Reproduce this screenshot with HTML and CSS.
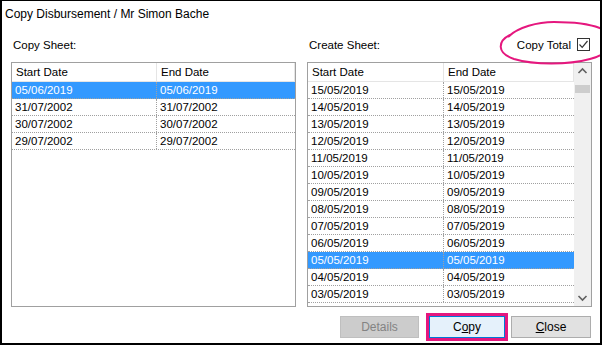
FILE: index.html
```html
<!DOCTYPE html>
<html lang="en">
<head>
  <meta charset="UTF-8" />
  <title>Copy Disbursement</title>
  <link rel="stylesheet" href="styles.css">
</head>
<body>

  <div class="window">
    <div class="title">Copy Disbursement / Mr Simon Bache</div>

    <div class="panes">
      <!-- Copy sheet (left) -->
      <div class="pane">
        <div class="pane-head">Copy Sheet:</div>
        <div class="list">
          <div class="grid left">
            <div class="row head"><div class="cell">Start Date</div><div class="cell">End Date</div></div>
            <div class="row sel"><div class="cell">05/06/2019</div><div class="cell">05/06/2019</div></div>
            <div class="row"><div class="cell">31/07/2002</div><div class="cell">31/07/2002</div></div>
            <div class="row"><div class="cell">30/07/2002</div><div class="cell">30/07/2002</div></div>
            <div class="row"><div class="cell">29/07/2002</div><div class="cell">29/07/2002</div></div>
          </div>
        </div>
      </div>

      <!-- Create sheet (right) -->
      <div class="pane">
        <div class="pane-head">
          <span>Create Sheet:</span>
          <span class="spacer"></span>
          <span class="copy-total">Copy Total</span>
          <span class="checkbox">
            <svg width="11" height="11" viewBox="0 0 11 11"><path d="M1.5 5.5 L4.2 8.3 L9.5 2" fill="none" stroke="#333" stroke-width="1.2"/></svg>
          </span>
        </div>
        <div class="list">
          <div class="grid right">
            <div class="row head"><div class="cell">Start Date</div><div class="cell">End Date</div></div>
            <div class="row"><div class="cell">15/05/2019</div><div class="cell">15/05/2019</div></div>
            <div class="row"><div class="cell">14/05/2019</div><div class="cell">14/05/2019</div></div>
            <div class="row"><div class="cell">13/05/2019</div><div class="cell">13/05/2019</div></div>
            <div class="row"><div class="cell">12/05/2019</div><div class="cell">12/05/2019</div></div>
            <div class="row"><div class="cell">11/05/2019</div><div class="cell">11/05/2019</div></div>
            <div class="row"><div class="cell">10/05/2019</div><div class="cell">10/05/2019</div></div>
            <div class="row"><div class="cell">09/05/2019</div><div class="cell">09/05/2019</div></div>
            <div class="row"><div class="cell">08/05/2019</div><div class="cell">08/05/2019</div></div>
            <div class="row"><div class="cell">07/05/2019</div><div class="cell">07/05/2019</div></div>
            <div class="row"><div class="cell">06/05/2019</div><div class="cell">06/05/2019</div></div>
            <div class="row sel"><div class="cell">05/05/2019</div><div class="cell">05/05/2019</div></div>
            <div class="row"><div class="cell">04/05/2019</div><div class="cell">04/05/2019</div></div>
            <div class="row"><div class="cell">03/05/2019</div><div class="cell">03/05/2019</div></div>
          </div>
          <div class="scrollbar">
            <svg class="arrow" width="17" height="17" viewBox="0 0 17 17"><path d="M4.5 10 L8.5 6 L12.5 10" fill="none" stroke="#606060" stroke-width="1.6"/></svg>
            <div class="thumb"></div>
            <div class="spacer"></div>
            <svg class="arrow" width="17" height="17" viewBox="0 0 17 17"><path d="M4.5 7 L8.5 11 L12.5 7" fill="none" stroke="#606060" stroke-width="1.6"/></svg>
          </div>
        </div>
      </div>
    </div>

    <div class="buttons">
      <div class="btn disabled">Details</div>
      <div class="btn focus">C<u>o</u>py</div>
      <div class="btn"><u>C</u>lose</div>
    </div>

    <!-- hand drawn highlight round "Copy Total" -->
    <svg class="ring" width="112" height="56" viewBox="0 0 112 56">
      <path d="M16 20 C26 10, 46 5, 62 5 C84 5, 104 8, 114 14" fill="none" stroke="#e5177e" stroke-width="2"/>
      <path d="M18 18 C6 24, 4 36, 22 42 C42 48, 76 48, 98 42 C106 40, 111 37, 114 34" fill="none" stroke="#e5177e" stroke-width="2"/>
    </svg>
  </div>

</body>
</html>
```

FILE: styles.css
```css
body {
  margin: 0;
  background: #fff;
}
.window {
  position: relative;
  width: 602px;
  height: 345px;
  box-sizing: border-box;
  border: 2px solid #000;
  border-top-width: 1px;
  padding: 0 8px 0 9px;
  background: #fff;
  font-family: "Liberation Sans", Arial, sans-serif;
  font-size: 11.5px;
  color: #000;
  overflow: hidden;
}
.title {
  height: 26px;
  line-height: 26px;
  margin-left: -6px;
  font-size: 12px;
}
.panes {
  display: grid;
  grid-template-columns: 285px 285px;
  column-gap: 11px;
}
.pane-head {
  height: 35px;
  display: flex;
  align-items: center;
  padding-left: 2px;
}
.spacer {
  flex: 1;
}
.copy-total {
  margin-right: 6px;
}
.checkbox {
  width: 11px;
  height: 11px;
  border: 1px solid #333;
  margin-right: 2px;
  display: flex;
}
.list {
  height: 245px;
  box-sizing: border-box;
  border: 1px solid #a0a0a0;
  display: flex;
  overflow: hidden;
}
.grid {
  flex: 1;
}
.row {
  display: flex;
  height: 16px;
  line-height: 16px;
  border-bottom: 1px dotted #a0a0a0;
}
.row .cell {
  padding-left: 3px;
  box-sizing: border-box;
  white-space: nowrap;
}
.row .cell:first-child {
  border-right: 1px dotted #a0a0a0;
}
.row .cell:last-child {
  flex: 1;
}
.left .cell:first-child {
  width: 145px;
}
.right .cell:first-child {
  width: 136px;
}
.row.head {
  height: 18px;
  line-height: 18px;
  border-bottom: 1px solid #e5e5e5;
}
.row.head .cell {
  padding-left: 4px;
}
.row.head .cell:first-child {
  border-right: 1px solid #e5e5e5;
}
.row.head .cell:last-child {
  border-right: 1px solid #e5e5e5;
}
.row.sel {
  background: #3399ff;
  color: #fff;
}
.scrollbar {
  width: 17px;
  background: #f0f0f0;
  display: flex;
  flex-direction: column;
  align-items: center;
}
.arrow {
  display: block;
  flex: none;
}
.thumb {
  width: 15px;
  height: 8px;
  margin-top: 5px;
  background: #cdcdcd;
}
.buttons {
  display: flex;
  justify-content: flex-end;
  margin-top: 9px;
}
.btn {
  width: 78px;
  height: 22px;
  line-height: 20px;
  box-sizing: border-box;
  border: 1px solid #adadad;
  background: #e1e1e1;
  text-align: center;
  font-size: 12px;
  margin-left: 6px;
}
.btn.disabled {
  width: 79px;
  background: #cccccc;
  border-color: #bfbfbf;
  color: #838383;
}
.btn.focus {
  width: 76px;
  margin-left: 10px;
  background: #e5f1fb;
  border-color: #0078d7;
  outline: 3px solid #e5177e;
  outline-offset: 0;
}
.btn:last-child {
  width: 80px;
  margin-right: 1px;
}
.ring {
  position: absolute;
  left: 490px;
  top: 16px;
}
```
